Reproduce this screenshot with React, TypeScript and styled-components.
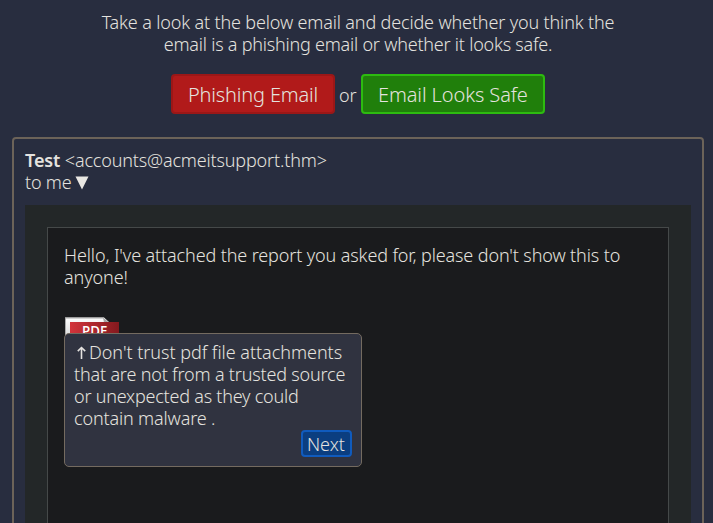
import React from "react";
import styled, { createGlobalStyle } from "styled-components";

const Global = createGlobalStyle`
  * { box-sizing: border-box; }
  body {
    margin: 0;
    background: #282d3f;
    color: #e4e2df;
    font: 300 18px/22px "Noto Sans", "Open Sans", sans-serif;
    overflow: hidden;
  }
`;

const Page = styled.main`
  height: 523px;
  padding: 11px 9px 0 12px;
  display: flex;
  flex-direction: column;
  overflow: hidden;
`;

const Line = styled.span<{ $track?: number }>`
  display: block;
  white-space: nowrap;
  letter-spacing: ${(p) => p.$track ?? 0}px;
`;

const Intro = styled.p`
  margin: 0;
  height: 44px;
  text-align: center;
`;

const Choices = styled.div`
  display: flex;
  align-items: center;
  margin: 19px 0 0 159px;
  height: 40px;
`;

const Choice = styled.button<{ $fill: string; $edge: string; $width: number; $track: number }>`
  width: ${(p) => p.$width}px;
  height: 40px;
  padding: 1px 0 0 15px;
  text-align: left;
  border: 2px solid ${(p) => p.$edge};
  border-radius: 4px;
  background: ${(p) => p.$fill};
  color: inherit;
  font: inherit;
  font-size: 20px;
  line-height: 36px;
  letter-spacing: ${(p) => p.$track}px;
  white-space: nowrap;
`;

const Or = styled.span`
  width: 26px;
  padding-left: 4px;
  padding-top: 2px;
`;

const EmailCard = styled.section`
  flex: none;
  height: 420px;
  margin-top: 23px;
  padding: 10px 11px 0;
  border: 2px solid #6c6359;
  border-radius: 4px;
`;

const Sender = styled.header`
  height: 56px;
  b { font-weight: 600; letter-spacing: -0.1px; }
`;

const Recipient = styled.div`
  display: flex;
  align-items: center;
  gap: 4px;
`;

const Caret = styled.svg`
  margin-top: 2px;
`;

const Backdrop = styled.div`
  height: 340px;
  padding: 22px;
  background: #232728;
`;

const Paper = styled.article`
  height: 330px;
  padding: 16px;
  border: 1px solid #454949;
  background: #1a1b1d;
`;

const Attachment = styled.div`
  position: relative;
  margin-top: 29px;
`;

const PdfIcon = styled.svg`
  display: block;
`;

const Tooltip = styled.aside`
  position: absolute;
  left: 0;
  top: 16px;
  width: 298px;
  height: 134px;
  padding: 7px 9px 9px;
  border: 1px solid #746b60;
  border-radius: 5px;
  background: #303340;
  display: flex;
  flex-direction: column;
`;

const ArrowLine = styled.div`
  display: flex;
`;

const ArrowIcon = styled.svg`
  flex: none;
  margin-right: -1px;
`;

const Next = styled.button`
  align-self: flex-end;
  width: 51px;
  height: 27px;
  margin-top: 1px;
  padding: 1px 0 0 4px;
  text-align: left;
  border: 2px solid #105bbd;
  border-radius: 4px;
  background: #0b3e80;
  color: inherit;
  font: inherit;
  line-height: 23px;
`;

export default function App() {
  return (
    <Page>
      <Global />
      <Intro>
        <Line $track={-0.15}>Take a look at the below email and decide whether you think the</Line>
        <Line $track={-0.22}>email is a phishing email or whether it looks safe.</Line>
      </Intro>
      <Choices>
        <Choice $fill="#b11a1a" $edge="#9b1717" $width={164} $track={-0.17}>Phishing Email</Choice>
        <Or>or</Or>
        <Choice $fill="#207f0b" $edge="#2dbb10" $width={184} $track={-0.1}>Email Looks Safe</Choice>
      </Choices>
      <EmailCard>
        <Sender>
          <Line $track={-0.16}><b>Test</b> &lt;accounts@acmeitsupport.thm&gt;</Line>
          <Recipient>
            <Line $track={-0.2}>to me</Line>
            <Caret width="14" height="14" viewBox="0 0 14 14"><path d="M0.5 0.5H13.5L7 13.5Z" fill="#e9e7e3" /></Caret>
          </Recipient>
        </Sender>
        <Backdrop>
          <Paper>
            <Line $track={-0.12}>Hello, I've attached the report you asked for, please don't show this to</Line>
            <Line $track={-0.1}>anyone!</Line>
            <Attachment>
              <PdfIcon width="56" height="30" viewBox="0 0 56 30">
                <defs>
                  <linearGradient id="ribbon"><stop stopColor="#d3343b" /><stop offset="1" stopColor="#84191e" /></linearGradient>
                  <linearGradient id="sheet" x2="0" y2="1"><stop stopColor="#fff" /><stop offset="1" stopColor="#c8c8c8" /></linearGradient>
                </defs>
                <path d="M1 0.5H40L46 6V28H1Z" fill="url(#sheet)" />
                <path d="M1.5 28V1H40" fill="none" stroke="#aaa" />
                <path d="M39 0.5L45 5.5H40Z" fill="#a7a7a7" />
                <path d="M6 5H55V22H6Z" fill="url(#ribbon)" />
                <text x="18" y="18.6" fill="#fff" fontFamily="Open Sans" fontWeight="600" fontSize="14" textLength="25" lengthAdjust="spacingAndGlyphs">PDF</text>
              </PdfIcon>
              <Tooltip>
                <ArrowLine>
                  <ArrowIcon width="16" height="22" viewBox="0 0 16 22">
                    <path d="M7.5 18V6.6M3.8 10.1L7.5 6.5L11.2 10.1" fill="none" stroke="#e4e2df" strokeWidth="1.6" />
                  </ArrowIcon>
                  <Line $track={-0.03}>Don't trust pdf file attachments</Line>
                </ArrowLine>
                <Line $track={-0.18}>that are not from a trusted source</Line>
                <Line $track={-0.22}>or unexpected as they could</Line>
                <Line $track={-0.15}>contain malware .</Line>
                <Next>Next</Next>
              </Tooltip>
            </Attachment>
          </Paper>
        </Backdrop>
      </EmailCard>
    </Page>
  );
}
